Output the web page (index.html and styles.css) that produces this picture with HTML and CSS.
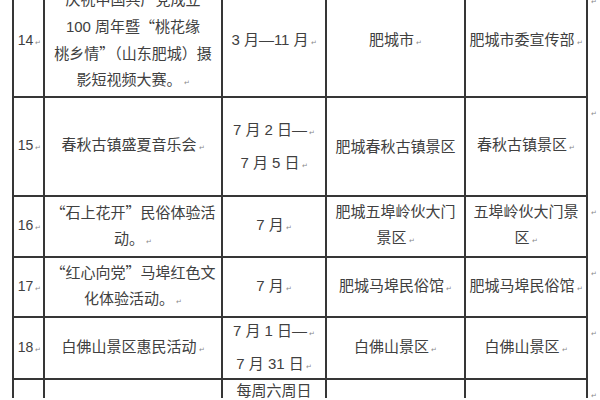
FILE: index.html
```html
<!DOCTYPE html>
<html lang="zh">
<head>
<meta charset="utf-8">
<title>活动安排表</title>
<link rel="stylesheet" href="styles.css">
</head>
<body>
<div class="page">
  <div class="table">
    <div class="cell num"><p>14<span class="pm">↵</span></p></div>
    <div class="cell"><p>庆祝中国共产党成立<br>100 周年暨<span class="q">“</span>桃花缘<br>桃乡情<span class="q">”</span>（山东肥城）摄<br>影短视频大赛。<span class="pm">↵</span></p></div>
    <div class="cell"><p>3 月—11 月<span class="pm">↵</span></p></div>
    <div class="cell"><p>肥城市<span class="pm">↵</span></p></div>
    <div class="cell"><p>肥城市委宣传部<span class="pm">↵</span></p></div>

    <div class="cell num"><p>15<span class="pm">↵</span></p></div>
    <div class="cell"><p>春秋古镇盛夏音乐会<span class="pm">↵</span></p></div>
    <div class="cell date"><p>7 月 2 日—<span class="pm">↵</span><br>7 月 5 日<span class="pm">↵</span></p></div>
    <div class="cell"><p>肥城春秋古镇景区</p></div>
    <div class="cell"><p>春秋古镇景区<span class="pm">↵</span></p></div>

    <div class="cell num"><p>16<span class="pm">↵</span></p></div>
    <div class="cell"><p><span class="q">“</span>石上花开<span class="q">”</span>民俗体验活<br>动。<span class="pm">↵</span></p></div>
    <div class="cell"><p>7 月<span class="pm">↵</span></p></div>
    <div class="cell"><p>肥城五埠岭伙大门<br>景区<span class="pm">↵</span></p></div>
    <div class="cell"><p>五埠岭伙大门景<br>区<span class="pm">↵</span></p></div>

    <div class="cell num"><p>17<span class="pm">↵</span></p></div>
    <div class="cell"><p><span class="q">“</span>红心向党<span class="q">”</span>马埠红色文<br>化体验活动。<span class="pm">↵</span></p></div>
    <div class="cell"><p>7 月<span class="pm">↵</span></p></div>
    <div class="cell"><p>肥城马埠民俗馆<span class="pm">↵</span></p></div>
    <div class="cell"><p>肥城马埠民俗馆<span class="pm">↵</span></p></div>

    <div class="cell num"><p>18<span class="pm">↵</span></p></div>
    <div class="cell"><p>白佛山景区惠民活动<span class="pm">↵</span></p></div>
    <div class="cell date"><p>7 月 1 日—<span class="pm">↵</span><br>7 月 31 日<span class="pm">↵</span></p></div>
    <div class="cell"><p>白佛山景区<span class="pm">↵</span></p></div>
    <div class="cell"><p>白佛山景区<span class="pm">↵</span></p></div>

    <div class="cell num top"></div>
    <div class="cell top"></div>
    <div class="cell top"><p>每周六周日</p></div>
    <div class="cell top"></div>
    <div class="cell top"></div>
  </div>
  <div class="marks">
    <span class="rm">↵</span>
    <span class="rm">↵</span>
    <span class="rm">↵</span>
    <span class="rm">↵</span>
    <span class="rm">↵</span>
    <span class="rm">↵</span>
  </div>
</div>
</body>
</html>
```

FILE: styles.css
```css
html, body {
  margin: 0;
  padding: 0;
  background: #ffffff;
  width: 600px;
  height: 400px;
  overflow: hidden;
}

.page {
  display: flex;
  align-items: flex-start;
  margin-top: -16px;
  padding-left: 12px;
  font-family: "Liberation Sans", "Noto Sans CJK SC", sans-serif;
  font-size: 15px;
  color: #404040;
}

.table {
  display: grid;
  grid-template-columns: 29px 176px 102px 137px 120px;
  grid-template-rows: 110px 97px 59px 58px 60px 18px;
  gap: 2px;
  padding: 2px 2px 0 2px;
  background: #363636;
  width: max-content;
}

.cell {
  background: #ffffff;
  display: flex;
  align-items: center;
  justify-content: center;
  text-align: center;
  line-height: 26px;
  white-space: nowrap;
  overflow: hidden;
}

.cell p {
  margin: 0;
}

.q {
  font-family: "Noto Sans CJK SC", sans-serif;
}

.cell.num {
  font-size: 14px;
  padding-left: 2px;
}

.cell.date {
  line-height: 30px;
}

.cell.date p {
  padding-top: 2px;
}

.cell.top {
  align-items: flex-start;
  line-height: 18px;
  padding-top: 2px;
}

.pm {
  font-size: 7px;
  color: #8a8a8a;
  margin-left: 2px;
}

.marks {
  display: grid;
  grid-template-rows: 110px 97px 59px 58px 60px 18px;
  row-gap: 2px;
  padding-top: 2px;
  padding-left: 3px;
}

.rm {
  font-size: 7px;
  color: #8a8a8a;
  padding-top: 12px;
  line-height: 8px;
}
```
